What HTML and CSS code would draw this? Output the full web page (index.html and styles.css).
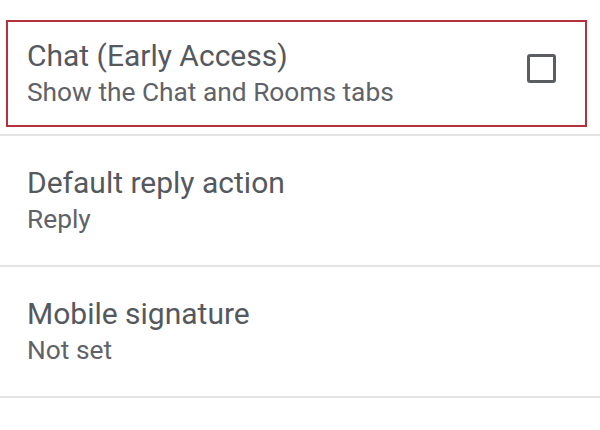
FILE: index.html
```html
<!DOCTYPE html>
<html lang="en">
<head>
    <meta charset="UTF-8">
    <title>Settings</title>
    <link rel="stylesheet" href="styles.css">
</head>
<body>

<div class="settings">
    <div class="item first">
        <div class="highlight">
            <div class="text">
                <div class="title">Chat (Early Access)</div>
                <div class="summary">Show the Chat and Rooms tabs</div>
            </div>
            <span class="checkbox"></span>
        </div>
    </div>

    <div class="item">
        <div class="text">
            <div class="title">Default reply action</div>
            <div class="summary">Reply</div>
        </div>
    </div>

    <div class="item">
        <div class="text">
            <div class="title">Mobile signature</div>
            <div class="summary">Not set</div>
        </div>
    </div>
</div>

</body>
</html>
```

FILE: styles.css
```css
body {
    margin: 0;
    background: #fff;
    font-family: Roboto, "Liberation Sans", sans-serif;
}
.settings { width: 600px; }
.item {
    height: 129px;
    border-bottom: 2px solid #e3e3e3;
    padding: 0 0 0 27px;
    display: flex;
    align-items: center;
}
.item.first {
    height: 114px;
    padding: 20px 13px 0 6px;
    align-items: flex-start;
}
.highlight {
    flex: 1;
    height: 103px;
    border: 2px solid #b3323e;
    display: flex;
    align-items: center;
    padding-left: 19px;
}
.text { flex: 1; }
.title {
    font-size: 30px;
    line-height: 37px;
    color: #55595d;
}
.summary {
    font-size: 26.3px;
    line-height: 37px;
    color: #5f6368;
}
.checkbox {
    width: 23px;
    height: 23px;
    border: 3px solid #5a5e62;
    border-radius: 3px;
    margin: 0 29px 10px 0;
}
```
